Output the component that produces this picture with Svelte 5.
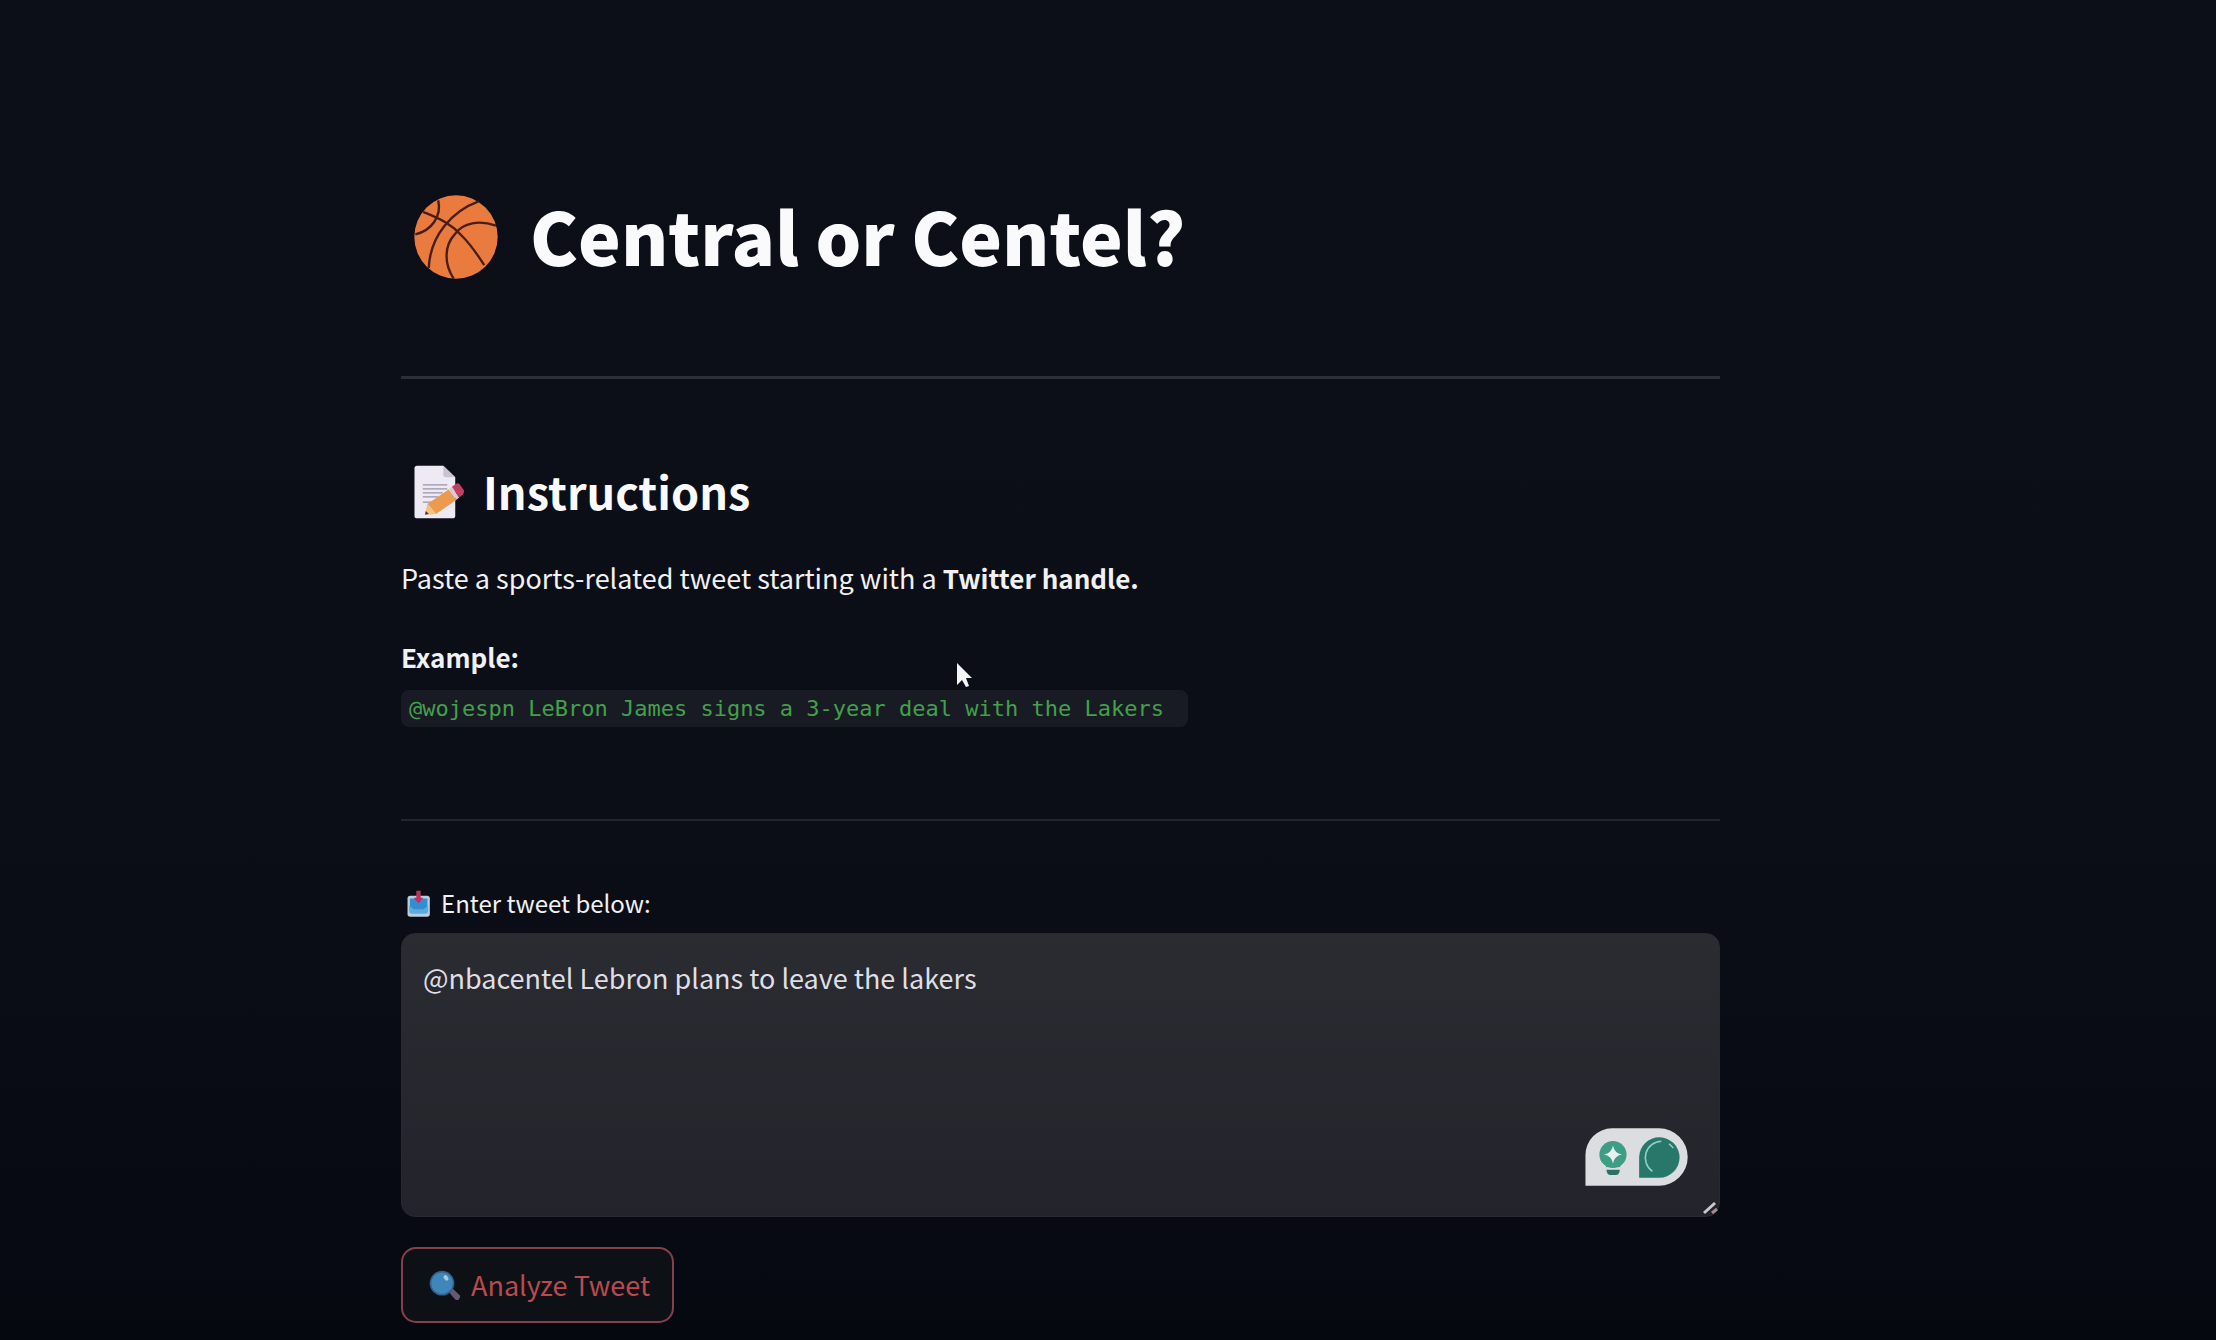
<script lang="ts">
  let tweet = $state('@nbacentel Lebron plans to leave the lakers');
</script>

<main class="page">
  <div class="column">
    <h1>
      <svg class="ball" viewBox="75 75 250 250" aria-hidden="true">
        <circle cx="200" cy="200" r="124" fill="#e97b3e" />
        <g fill="none" stroke="#4b1d17" stroke-width="7">
          <path d="M102 125C160 148 190 165 215 194C244 222 262 249 284 284" />
          <path d="M147 91C158 137 128 181 79 192" />
          <path d="M267 94C188 123 123 196 119 292" />
          <path d="M319 166C270 149 221 157 198 190C164 226 164 278 193 324" />
        </g>
      </svg>
      <span>Central or Centel?</span>
    </h1>
    <hr class="strong" />

    <section class="instructions">
      <h3>
        <svg class="memo" viewBox="74 75 153 163" aria-hidden="true">
          <path d="M83 77H162L198 112V228Q198 236 190 236H83Q75 236 75 228V85Q75 77 83 77Z" fill="#eeeaf4" />
          <path d="M162 77L198 112H170Q162 112 162 104Z" fill="#c9c2d2" />
          <path d="M100 135H174M100 147H174M100 159H160M100 171H146M100 187H128" stroke="#9b93a6" stroke-width="4" />
          <path d="M115 192L178 149L202 180L141 222L107 225Z" fill="#ec9a50" />
          <path d="M115 192L141 222L107 225Z" fill="#f3c184" />
          <path d="M109 214L118 222L107 225Z" fill="#3b3542" />
          <path d="M178 149L188 141L210 173L202 180Z" fill="#d9cbd5" />
          <path d="M188 141L200 132Q207 128 212 134L224 151Q227 158 221 164L210 173Z" fill="#c43e63" />
        </svg>
        <span>Instructions</span>
      </h3>
      <p>Paste a sports-related tweet starting with a <strong>Twitter handle.</strong></p>
      <p class="example"><strong>Example:</strong><br /><code>@wojespn LeBron James signs a 3-year deal with the Lakers</code></p>
      <svg class="pointer" viewBox="0 0 17 26" aria-hidden="true">
        <path d="M1 1V23L6 18L10 25L13 24L10 16H16Z" fill="#f5f5f7" />
      </svg>
    </section>
    <hr />

    <form onsubmit={(event) => event.preventDefault()}>
      <label for="tweet">
        <svg class="inbox" viewBox="50 63 70 80" aria-hidden="true">
          <rect x="51" y="80" width="66" height="62" rx="8" fill="#b9cfdf" />
          <path d="M58 88H110V114L98 126H70L58 114Z" fill="#2f8fd0" />
          <path d="M56 110L70 120H98L112 110V126Q112 133 105 133H63Q56 133 56 126Z" fill="#5fa9dc" />
          <path d="M77 65H90V86H98L84 102L69 86H77Z" fill="#b93361" />
        </svg>
        <span>Enter tweet below:</span>
      </label>
      <div class="field">
        <textarea id="tweet" bind:value={tweet} spellcheck="false"></textarea>
        <svg class="assistant" viewBox="135 88 310 175" aria-hidden="true">
          <path d="M136 262V170A80 80 0 0 1 216 89H358A86 86 0 0 1 358 262Z" fill="#dcdde1" />
          <circle cx="219" cy="168" r="41" fill="#3f9c85" />
          <path d="M198 196H241V206H198Z" fill="#3f9c85" />
          <path d="M219 141Q223 164 246 168Q223 172 219 195Q215 172 192 168Q215 164 219 141Z" fill="#e4f3ef" />
          <path d="M199 214H240Q238 230 228 230H211Q201 230 199 214Z" fill="#2b7264" />
          <path d="M298 238V176A61 61 0 1 1 359 238Z" fill="#27776a" />
          <path d="M338 219A50 50 0 0 1 365 128" fill="none" stroke="#8fd0c2" stroke-width="5" />
          <path d="M388 136A50 50 0 0 1 401 149" fill="none" stroke="#8fd0c2" stroke-width="4" />
        </svg>
        <svg class="grip" viewBox="0 0 16 14" aria-hidden="true">
          <path d="M1 12L12 2" stroke="#c9c9ce" stroke-width="3" />
          <path d="M9 12L14 8" stroke="#a9888e" stroke-width="3" />
        </svg>
      </div>
      <button type="submit">
        <svg class="lens" viewBox="145 240 96 92" aria-hidden="true">
          <path d="M203 304L215 294L237 315Q241 321 235 327Q229 332 223 327Z" fill="#655a70" />
          <circle cx="184" cy="279" r="37" fill="#33618a" />
          <circle cx="184" cy="279" r="32" fill="#3f86bb" />
          <ellipse cx="196" cy="263" rx="6" ry="9" fill="#a5cbe0" transform="rotate(-35 196 263)" />
        </svg>
        <span>Analyze Tweet</span>
      </button>
    </form>
  </div>
</main>

<style>
  :global(body) {
    margin: 0;
    background: #0c0f17;
  }
  .page {
    box-sizing: border-box;
    min-height: 100vh;
    display: grid;
    grid-template-columns: 401fr 1319fr 496fr;
    padding: 180px 0 16px;
    background: linear-gradient(#0c0f17 0, #0b0e16 62%, #070a12 92%, #060810 100%);
    color: #f1f1f3;
    font-family: 'Noto Sans CJK SC', 'Open Sans', sans-serif;
    font-size: 27px;
    line-height: 40px;
  }
  .column {
    grid-column: 2;
    min-width: 0;
  }
  h1,
  h3 {
    display: flex;
    align-items: center;
    margin: 0;
    padding-left: 13px;
    font-weight: 700;
    color: #fafafc;
  }
  h1 {
    gap: 32px;
    height: 114px;
    font-size: 72px;
    line-height: 108px;
  }
  h1 span {
    padding-bottom: 4px;
    font-weight: 900;
  }
  h3 {
    gap: 18px;
    height: 64px;
    font-size: 45px;
    line-height: 62px;
  }
  h3 span {
    padding-bottom: 2px;
  }
  svg {
    flex: none;
  }
  .ball {
    width: 84px;
    height: 84px;
  }
  .memo {
    width: 51px;
    height: 54px;
  }
  hr {
    height: 2px;
    margin: 0;
    border: 0;
    background: #23252d;
  }
  hr.strong {
    margin-top: 82px;
    height: 3px;
    background: #2c3036;
  }
  .instructions {
    position: relative;
    padding: 81px 0 90px;
  }
  p {
    margin: 34px 0 0;
  }
  .example {
    margin-top: 35px;
    line-height: 48px;
  }
  strong {
    font-size: 26px;
    font-weight: 700;
  }
  code {
    padding: 6px 24px 6px 8px;
    border-radius: 8px;
    background: #191b24;
    color: #43a04c;
    font-family: 'DejaVu Sans Mono', monospace;
    font-size: 22px;
    line-height: 30px;
  }
  .pointer {
    position: absolute;
    left: 555px;
    top: 283px;
    width: 17px;
    height: 26px;
  }
  form {
    padding-top: 64px;
  }
  label {
    display: flex;
    align-items: center;
    gap: 10px;
    padding-left: 6px;
    margin-bottom: 12px;
    font-size: 24px;
    line-height: 36px;
  }
  .inbox {
    width: 24px;
    height: 27px;
  }
  .field {
    position: relative;
  }
  textarea {
    display: block;
    box-sizing: border-box;
    width: 100%;
    height: 284px;
    padding: 24px 21px;
    border: 1px solid #2a2930;
    border-radius: 14px;
    outline: none;
    resize: none;
    background: linear-gradient(#2b2b32, #23232b);
    color: #dfdfe3;
    font: inherit;
  }
  .assistant {
    position: absolute;
    right: 32px;
    bottom: 31px;
    width: 103px;
    height: 58px;
  }
  .grip {
    position: absolute;
    right: 1px;
    bottom: 2px;
    width: 16px;
    height: 14px;
  }
  button {
    display: flex;
    align-items: center;
    gap: 10px;
    height: 76px;
    margin-top: 30px;
    padding: 0 22px 0 26px;
    border: 2px solid #87404b;
    border-radius: 15px;
    background: #0d1116;
    color: #ba4a50;
    font: inherit;
  }
  .lens {
    width: 32px;
    height: 31px;
  }
</style>
